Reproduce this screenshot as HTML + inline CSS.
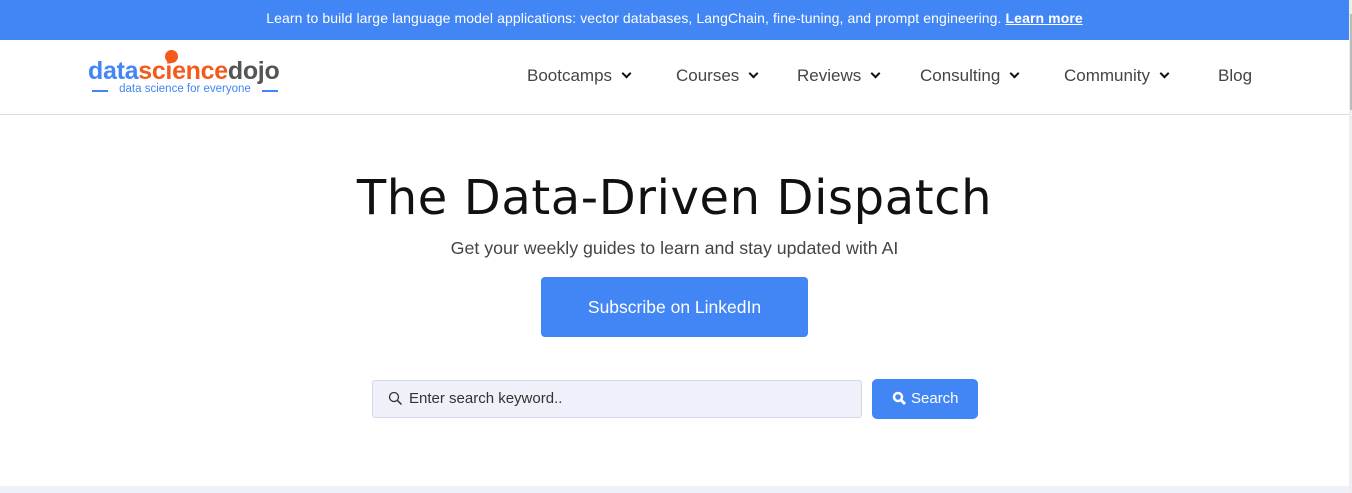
<!DOCTYPE html>
<html><head><meta charset="utf-8"><style>
*{margin:0;padding:0;box-sizing:border-box}
body{width:1352px;height:493px;overflow:hidden;background:#fff;font-family:"Liberation Sans",sans-serif;position:relative}
.top{position:absolute;left:0;top:0;width:1349px;height:40px;background:#4285f4;color:#fff;font-size:14px;letter-spacing:0.1px;text-align:center;line-height:37px}
.top b{text-decoration:underline}
.hdr{position:absolute;left:0;top:40px;width:1349px;height:75px;border-bottom:1px solid #d5dde6}
.logo{position:absolute;left:88px;top:17px;font-size:25px;font-weight:bold;letter-spacing:-0.3px}
.logo .a{color:#4285f4}.logo .b{color:#f35a1b}.logo .c{color:#555}
.dot{position:absolute;left:77px;top:-7px;width:13px;height:13px;border-radius:50%;background:#f35a1b}
.tag{position:absolute;left:92px;top:83px;font-size:11.5px;color:#4285f4;width:186px;text-align:center}
.tag:before,.tag:after{content:"";position:absolute;top:7px;width:16px;height:2px;background:#4285f4}
.tag:before{left:0}.tag:after{right:0}
.nav{position:absolute;top:26px;font-size:17px;color:#444}
.nav span{position:absolute;white-space:nowrap}
.chev{display:inline-block;width:7px;height:7px;border-right:2.5px solid #111;border-bottom:2.5px solid #111;transform:rotate(45deg);margin-left:11px;position:relative;top:-4px}
h1{position:absolute;top:170px;left:0;width:1349px;text-align:center;font-family:"DejaVu Sans",sans-serif;font-size:48px;letter-spacing:0.6px;font-weight:normal;color:#111}
.sub{position:absolute;top:238px;width:1349px;text-align:center;font-size:17.8px;color:#444}
.btn{position:absolute;left:541px;top:277px;width:267px;height:60px;background:#4285f4;border-radius:4px;color:#fff;font-size:17.5px;text-align:center;line-height:60px}
.in{position:absolute;left:372px;top:380px;width:490px;height:38px;background:#eef0fa;border:1px solid #d3d8e6;border-radius:3px;font-size:15px;color:#333;line-height:36px;padding-left:36px}
.sb{position:absolute;left:872px;top:379px;width:106px;height:40px;background:#4285f4;border-radius:5px;color:#fff;font-size:15px;line-height:40px;padding-left:39px}
.foot{position:absolute;left:0;top:486px;width:1349px;height:7px;background:#eef0fa}
.scroll{position:absolute;left:1349px;top:0;width:3px;height:493px;background:#eee}
.thumb{position:absolute;left:1350px;top:14px;width:2px;height:96px;background:#bbb}
</style></head><body>
<div class="top">Learn to build large language model applications: vector databases, LangChain, fine-tuning, and prompt engineering. <b>Learn more</b></div>
<div class="hdr">
<div class="logo"><span class="a">data</span><span class="b">science</span><span class="c">dojo</span><div class="dot"></div></div>
</div>
<div class="tag">data science for everyone</div>
<div class="nav" style="top:66px;left:0;width:1349px">
<span style="left:527px">Bootcamps<i class="chev"></i></span>
<span style="left:676px">Courses<i class="chev"></i></span>
<span style="left:797px">Reviews<i class="chev"></i></span>
<span style="left:920px">Consulting<i class="chev"></i></span>
<span style="left:1064px">Community<i class="chev"></i></span>
<span style="left:1218px">Blog</span>
</div>
<h1>The Data-Driven Dispatch</h1>
<div class="sub">Get your weekly guides to learn and stay updated with AI</div>
<div class="btn">Subscribe on LinkedIn</div>
<div class="in"><svg style="position:absolute;left:15px;top:10px" width="15" height="15" viewBox="0 0 15 15"><circle cx="6" cy="6" r="4.5" fill="none" stroke="#333" stroke-width="1.3"/><line x1="9.3" y1="9.3" x2="13.5" y2="13.5" stroke="#333" stroke-width="1.5"/></svg>Enter search keyword..</div>
<div class="sb"><svg style="position:absolute;left:20px;top:12px" width="15" height="15" viewBox="0 0 15 15"><circle cx="6" cy="6" r="4" fill="none" stroke="#fff" stroke-width="2.5"/><line x1="9" y1="9" x2="13" y2="13" stroke="#fff" stroke-width="3"/></svg>Search</div>
<div class="foot"></div>
<div class="scroll"></div><div class="thumb"></div>
</body></html>
